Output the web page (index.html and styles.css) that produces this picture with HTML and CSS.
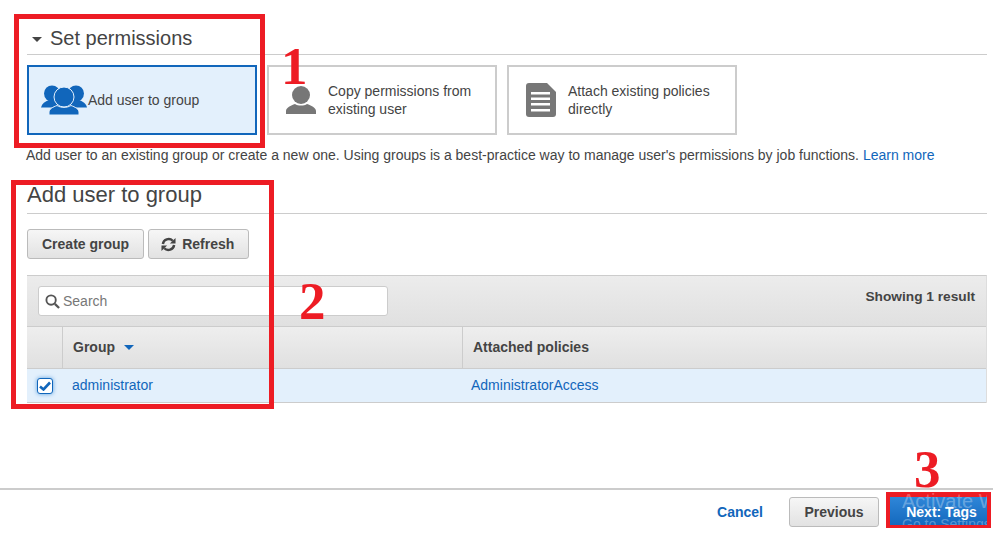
FILE: index.html
```html
<!DOCTYPE html>
<html lang="en">
<head>
  <meta charset="UTF-8" />
  <title>Set permissions</title>
  <link rel="stylesheet" href="styles.css">
</head>
<body>
  <main class="content">
    <div class="section-head">
      <span class="caret"></span>
      <h2>Set permissions</h2>
    </div>

    <div class="tiles">
      <div class="tile tile-active">
        <svg viewBox="0 0 46 30" width="46" height="30">
          <g fill="#1166bb">
            <circle cx="11" cy="8.500" r="8"/>
            <circle cx="35" cy="8.500" r="8"/>
            <path d="M0 22.500c1-4 4-6 8-7.500h30c4 1.500 7 3.500 8 7.500z"/>
          </g>
          <circle cx="23" cy="12" r="10" fill="#1166bb" stroke="#e3f0fc" stroke-width="1"/>
          <path d="M8 30v-3c0-3 4-5 8-6.500 4 2.500 10 2.500 14 0 4 1.500 8 3.500 8 6.500v3z" fill="#1166bb" stroke="#e3f0fc" stroke-width="1"/>
        </svg>
        <span>Add user to group</span>
      </div>
      <div class="tile">
        <svg viewBox="0 0 30 28" width="30" height="28">
          <circle cx="15" cy="9" r="9" fill="#777"/>
          <path d="M0 28v-3c0-3.500 5-5.500 9-7 3 2 9 2 12 0 4 1.500 9 3.500 9 7v3z" fill="#777"/>
        </svg>
        <span>Copy permissions from<br>existing user</span>
      </div>
      <div class="tile">
        <svg viewBox="0 0 30 34" width="30" height="34">
          <path d="M3 0h18l9 9v22a3 3 0 0 1-3 3H3a3 3 0 0 1-3-3V3a3 3 0 0 1 3-3z" fill="#777"/>
          <path d="M5 9h19v2.500H5zM5 14.500h19V17H5zM5 20h19v2.500H5zM5 26h19v2.500H5z" fill="#fff"/>
        </svg>
        <span>Attach existing policies<br>directly</span>
      </div>
    </div>

    <p class="desc">Add user to an existing group or create a new one. Using groups is a best-practice way to manage user's permissions by job functions. <a href="#">Learn more</a></p>

    <h2 class="sub-head">Add user to group</h2>

    <div class="actions">
      <button class="btn">Create group</button>
      <button class="btn btn-refresh">
        <svg viewBox="0 0 16 16" width="15" height="15">
          <path d="M2 7.500A6.200 6.200 0 0 1 12.500 4" fill="none" stroke="#444" stroke-width="2.600"/>
          <path d="M14 8.500A6.200 6.200 0 0 1 3.500 12" fill="none" stroke="#444" stroke-width="2.600"/>
          <path d="M15.500 1v6H9.500zM.5 15V9h6z" fill="#444"/>
        </svg>
        Refresh
      </button>
    </div>

    <div class="panel">
      <div class="panel-top">
        <div class="search">
          <svg viewBox="0 0 16 16" width="15" height="15">
            <circle cx="6.500" cy="6.500" r="5" fill="none" stroke="#555" stroke-width="2"/>
            <path d="M10.500 10.500L15 15" stroke="#555" stroke-width="2.400"/>
          </svg>
          <span>Search</span>
        </div>
        <div class="count">Showing 1 result</div>
      </div>
      <div class="row row-head">
        <div class="cell-check"></div>
        <div class="cell-group">Group <span class="sort"></span></div>
        <div class="cell-policy">Attached policies</div>
      </div>
      <div class="row row-selected">
        <div class="cell-check">
          <span class="checkbox">
            <svg viewBox="0 0 12 10" width="12" height="10"><path d="M1 5.500L4.500 8.500 11 1.500" fill="none" stroke="#1166bb" stroke-width="2.600"/></svg>
          </span>
        </div>
        <div class="cell-group"><a href="#">administrator</a></div>
        <div class="cell-policy"><a href="#">AdministratorAccess</a></div>
      </div>
    </div>
  </main>

  <footer class="footer">
    <a class="cancel" href="#">Cancel</a>
    <button class="btn">Previous</button>
    <button class="btn-primary">Next: Tags</button>
  </footer>

  <!-- screenshot annotations -->
  <div class="mark mark-1"></div>
  <div class="mark mark-2"></div>
  <div class="mark mark-3"></div>
  <div class="num num-1">1</div>
  <div class="num num-2">2</div>
  <div class="num num-3">3</div>
  <div class="watermark watermark-a">Activate W</div>
  <div class="watermark watermark-b">Go to Settings</div>
</body>
</html>
```

FILE: styles.css
```css
* { box-sizing: border-box; }
html, body { height: 100%; }
body {
  margin: 0;
  font-family: "Liberation Sans", Arial, sans-serif;
  font-size: 14px;
  color: #444;
  background: #fff;
  overflow: hidden;
  display: flex;
  flex-direction: column;
}
a { color: #1166bb; text-decoration: none; }
svg { display: block; flex: none; }

.content {
  flex: 1;
  padding: 26px 6px 0 27px;
}
.section-head {
  display: flex;
  align-items: center;
  height: 29px;
  padding-left: 5px;
  border-bottom: 1px solid #ccc;
  padding-bottom: 4px;
}
.section-head h2 {
  margin: 0 0 0 8px;
  font-size: 20px;
  font-weight: 400;
  line-height: 24px;
}
.caret {
  width: 0;
  height: 0;
  border-left: 5px solid transparent;
  border-right: 5px solid transparent;
  border-top: 5px solid #444;
  margin-top: 2px;
}

.tiles {
  display: flex;
  gap: 10px;
  margin-top: 10px;
}
.tile {
  width: 230px;
  height: 70px;
  border: 2px solid #ccc;
  display: flex;
  align-items: center;
  gap: 12px;
  padding-left: 17px;
  line-height: 18px;
}
.tile-active {
  background: #e3f0fc;
  border-color: #1166bb;
  padding-left: 12px;
  gap: 1px;
}

.desc {
  margin: 12px 0 0 -1px;
  line-height: 16px;
  white-space: nowrap;
}
.sub-head {
  margin: 19px 0 0;
  height: 32px;
  font-size: 22px;
  font-weight: 400;
  line-height: 26px;
  border-bottom: 1px solid #ccc;
}

.actions {
  display: flex;
  gap: 4px;
  margin-top: 15px;
}
.btn {
  height: 30px;
  padding: 0 14px;
  font: bold 14px "Liberation Sans", Arial, sans-serif;
  color: #444;
  border: 1px solid #bbb;
  border-radius: 3px;
  background: linear-gradient(#f6f6f6, #e2e2e2);
  display: inline-flex;
  align-items: center;
  gap: 6px;
}
.btn-refresh { padding: 0 14px 0 12px; }

.panel {
  margin-top: 16px;
  border-top: 1px solid #ccc;
  border-right: 1px solid #ddd;
}
.panel-top {
  height: 51px;
  display: flex;
  justify-content: space-between;
  padding: 10px 11px 0 11px;
  background: linear-gradient(#ececec, #e0e0e0);
  border-bottom: 1px solid #ccc;
}
.search {
  width: 350px;
  height: 30px;
  background: #fff;
  border: 1px solid #ccc;
  border-radius: 3px;
  display: flex;
  align-items: center;
  gap: 3px;
  padding-left: 6px;
  color: #777;
}
.count {
  margin-top: 1px;
  font-weight: bold;
  font-size: 13.700px;
  line-height: 20px;
}
.row { display: flex; }
.row-head {
  height: 42px;
  font-weight: bold;
  line-height: 41px;
  background: linear-gradient(#eeeeee, #e0e0e0);
  border-bottom: 1px solid #ccc;
}
.row-selected {
  height: 34px;
  line-height: 33px;
  background: #e3f0fc;
  border-bottom: 1px solid #ccc;
}
.cell-check {
  width: 36px;
  display: flex;
  align-items: center;
  justify-content: center;
}
.cell-group { width: 400px; padding-left: 10px; }
.row-head .cell-check, .row-head .cell-group { border-right: 1px solid #ccc; }
.row-selected .cell-group { padding-left: 9px; }
.cell-policy { padding-left: 10px; }
.row-selected .cell-policy { padding-left: 8px; }
.sort {
  display: inline-block;
  width: 0;
  height: 0;
  margin-left: 5px;
  vertical-align: 2px;
  border-left: 5px solid transparent;
  border-right: 5px solid transparent;
  border-top: 5px solid #1166bb;
}
.checkbox {
  width: 16px;
  height: 16px;
  background: #fff;
  border: 1px solid #1166bb;
  border-radius: 3px;
  box-shadow: 0 0 4px #5a9fe0;
  display: flex;
  align-items: center;
  justify-content: center;
}

.footer {
  height: 45px;
  border-top: 2px solid #ccc;
  display: flex;
  align-items: flex-start;
  justify-content: flex-end;
  padding: 7px 6px 0 0;
}
.cancel {
  font-weight: bold;
  line-height: 30px;
  margin-right: 26px;
}
.footer .btn { width: 90px; margin-right: 11px; padding: 0; justify-content: center; }
.btn-primary {
  width: 97px;
  height: 31px;
  border: none;
  padding: 0 0 2px 6px;
  font: bold 14px "Liberation Sans", Arial, sans-serif;
  color: #fff;
  background: linear-gradient(#2f86d8, #1166bb);
}

/* annotations */
.mark { position: absolute; border: 5px solid #ed1c24; }
.mark-1 { left: 14px; top: 14px; width: 251px; height: 134px; }
.mark-2 { left: 11px; top: 180px; width: 263px; height: 229px; }
.mark-3 { left: 886px; top: 492px; width: 105px; height: 36px; border-width: 5px 4px 3px; }
.num {
  position: absolute;
  font: bold 53px/53px "Liberation Serif", serif;
  color: #ed1c24;
}
.num-1 { left: 281px; top: 40px; }
.num-2 { left: 299px; top: 275px; }
.num-3 { left: 914px; top: 443px; }
.watermark {
  position: absolute;
  color: rgba(255, 255, 255, 0.3);
  white-space: nowrap;
  overflow: hidden;
}
.watermark-a { left: 902px; top: 490px; width: 85px; font-size: 20px; line-height: 23px; }
.watermark-b { left: 902px; top: 516px; width: 85px; height: 9px; font-size: 14px; line-height: 16px; }
```
